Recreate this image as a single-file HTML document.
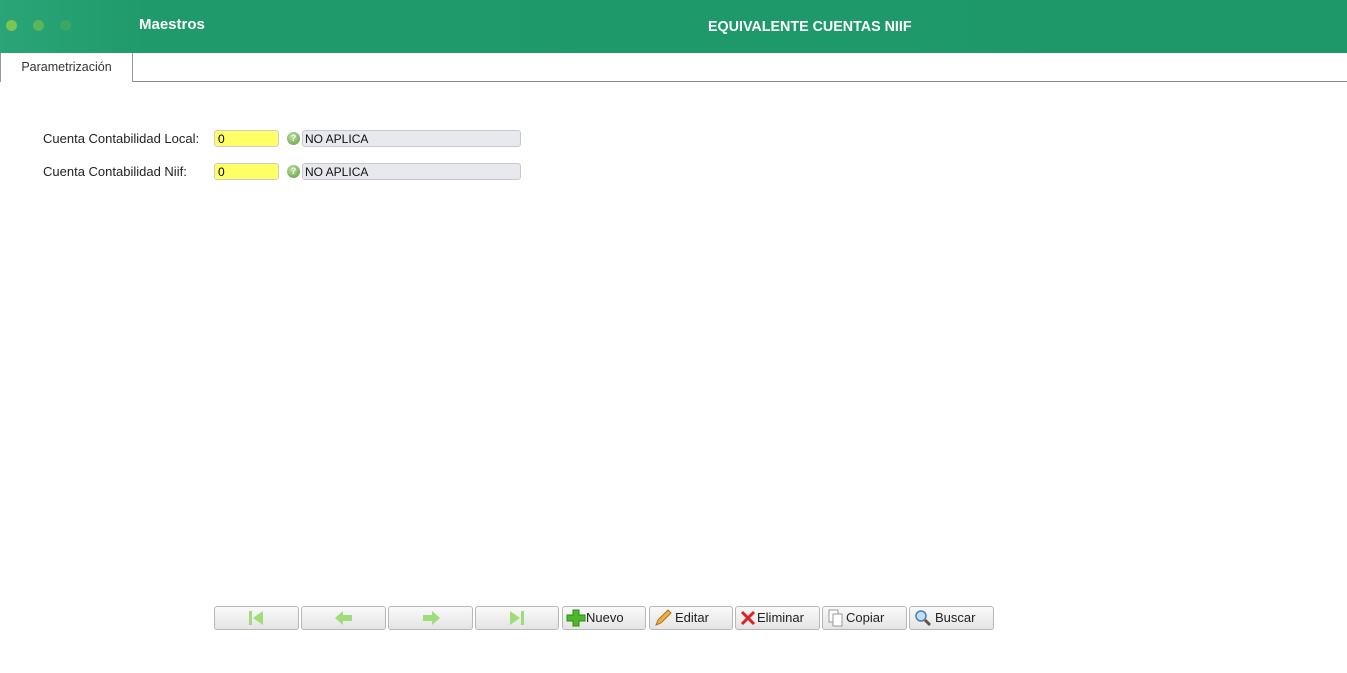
<!DOCTYPE html>
<html><head><meta charset="utf-8"><style>
*{box-sizing:border-box;margin:0;padding:0}
body{width:1347px;height:673px;background:#fff;font-family:"Liberation Sans",sans-serif;position:relative;overflow:hidden}
.hdr{position:absolute;left:0;top:0;width:1347px;height:53px;background:linear-gradient(90deg,#2aa577 0,#1f9a6a 150px,#1e9868 100%)}
.dot{position:absolute;top:20px;width:11px;height:11px;border-radius:50%}
.t{position:absolute;color:#fff;font-weight:bold;font-size:15px}
.tab{position:absolute;left:0;top:53px;width:133px;height:29px;border:1px solid #999;border-bottom:none;border-top:none;background:#fff;font-size:12.5px;color:#333;text-align:center;line-height:29px}
.line{position:absolute;left:133px;top:81px;width:1214px;height:1px;background:#888}
.lbl{position:absolute;left:43px;font-size:13px;color:#222}
.in{position:absolute;left:214px;width:65px;height:17px;background:#ffff66;border:1px solid #ccc;border-radius:3px;font-size:12px;padding-left:3px;line-height:16px}
.q{position:absolute;left:287px;width:13px;height:13px;border-radius:50%;background:radial-gradient(circle at 40% 35%,#bfe0a0,#5a9a40);color:#fff;font-size:9px;font-weight:bold;text-align:center;line-height:13px}
.na{position:absolute;left:302px;width:219px;height:17px;background:#e8e8ef;border:1px solid #c8c8d0;border-radius:3px;font-size:12px;padding-left:2px;line-height:17px;color:#111}
.btn{position:absolute;top:606px;height:24px;border:1px solid #b8b8b8;border-radius:3px;background:linear-gradient(#fafafa,#e4e4e4);font-size:13px;color:#222;line-height:22px;display:flex;align-items:center;justify-content:center;gap:0}
.b2{justify-content:flex-start;padding-left:3px}
</style></head><body>
<div class="hdr">
<div class="dot" style="left:6px;background:#7cc454"></div>
<div class="dot" style="left:33px;background:#5cb55a"></div>
<div class="dot" style="left:60px;background:#3aa862"></div>
<div class="t" style="left:139px;top:16px">Maestros</div>
<div class="t" style="left:708px;top:19px;font-size:14.3px">EQUIVALENTE CUENTAS NIIF</div>
</div>
<div class="tab">Parametrización</div>
<div class="line"></div>
<div class="lbl" style="top:131px">Cuenta Contabilidad Local:</div>
<div class="in" style="top:130px">0</div><div class="q" style="top:132px">?</div><div class="na" style="top:130px">NO APLICA</div>
<div class="lbl" style="top:164px">Cuenta Contabilidad Niif:</div>
<div class="in" style="top:163px">0</div><div class="q" style="top:165px">?</div><div class="na" style="top:163px">NO APLICA</div>

<div class="btn" style="left:214px;width:85px"><svg width="20" height="18"><rect x="2" y="2" width="3" height="14" fill="#9fdc7a"/><path d="M6 9L16 2V16Z" fill="#9fdc7a"/></svg></div>
<div class="btn" style="left:301px;width:85px"><svg width="20" height="18"><path d="M1 9L9 2V6H18V12H9V16Z" fill="#9fdc7a"/></svg></div>
<div class="btn" style="left:388px;width:85px"><svg width="20" height="18"><path d="M19 9L11 2V6H2V12H11V16Z" fill="#9fdc7a"/></svg></div>
<div class="btn" style="left:475px;width:84px"><svg width="20" height="18"><path d="M3 2L13 9L3 16Z" fill="#9fdc7a"/><rect x="14" y="2" width="3" height="14" fill="#9fdc7a"/></svg></div>
<div class="btn b2" style="left:562px;width:84px"><svg width="20" height="18"><path d="M7 1H13V6H19V12H13V17H7V12H1V6H7Z" fill="#4cb82a" stroke="#2e8a18"/></svg>Nuevo</div>
<div class="btn b2" style="left:649px;width:84px"><svg width="22" height="18"><path d="M3 16L5 11L15 1L18 4L8 14Z" fill="#f0b040" stroke="#b07020"/></svg>Editar</div>
<div class="btn b2" style="left:735px;width:85px"><svg width="18" height="16"><path d="M3 2L15 14M15 2L3 14" stroke="#e02020" stroke-width="3"/></svg>Eliminar</div>
<div class="btn b2" style="left:822px;width:85px"><svg width="20" height="18"><rect x="3" y="1" width="9" height="12" fill="#fff" stroke="#999"/><rect x="7" y="5" width="9" height="12" fill="#fff" stroke="#999"/></svg>Copiar</div>
<div class="btn b2" style="left:909px;width:85px"><svg width="22" height="18"><circle cx="8" cy="7" r="5" fill="#bde0f8" stroke="#4a80b0" stroke-width="1.5"/><path d="M12 11L17 16" stroke="#705030" stroke-width="3"/></svg>Buscar</div>
</body></html>
